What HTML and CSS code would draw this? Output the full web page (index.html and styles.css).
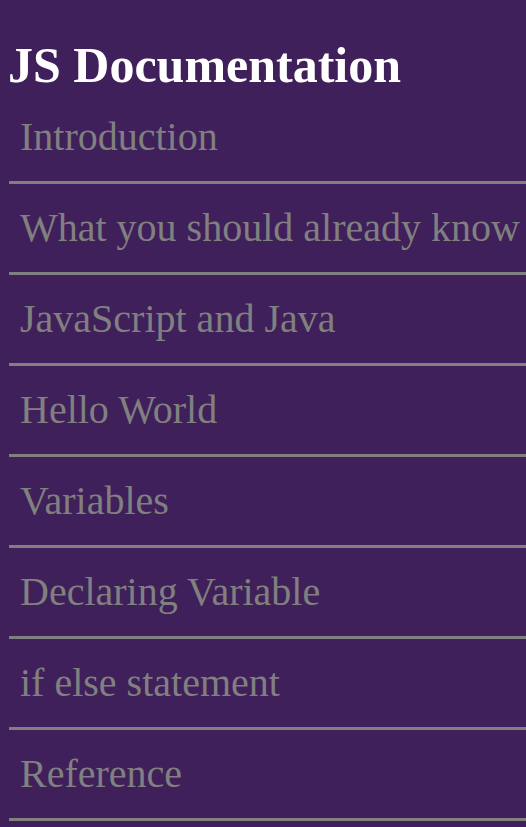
FILE: index.html
```html
<!DOCTYPE html>
<html>
<head>
<meta charset="utf-8">
<link rel="stylesheet" href="styles.css">
</head>
<body>
<nav class="navbar">
  <header class="title">JS Documentation</header>
  <ul class="nav-list">
    <li class="nav-item">Introduction</li>
    <li class="nav-item">What you should already know</li>
    <li class="nav-item">JavaScript and Java</li>
    <li class="nav-item">Hello World</li>
    <li class="nav-item">Variables</li>
    <li class="nav-item">Declaring Variable</li>
    <li class="nav-item">if else statement</li>
    <li class="nav-item">Reference</li>
  </ul>
</nav>
</body>
</html>
```
FILE: styles.css
```css
html, body {
  margin: 0;
  padding: 0;
  background: #40205a;
  overflow: hidden;
}
.navbar {
  font-family: "Liberation Serif", "Times New Roman", serif;
}
.title {
  display: block;
  margin: 38px 0 0 8px;
  font-size: 50px;
  font-weight: bold;
  line-height: 55px;
  color: #ffffff;
  white-space: nowrap;
}
.nav-list {
  list-style: none;
  margin: 0 0 0 9px;
  padding: 0;
}
.nav-item {
  padding: 21px 0 21px 11px;
  font-size: 40px;
  line-height: 46px;
  color: #808080;
  border-bottom: 3px solid #808080;
  white-space: nowrap;
}
```
